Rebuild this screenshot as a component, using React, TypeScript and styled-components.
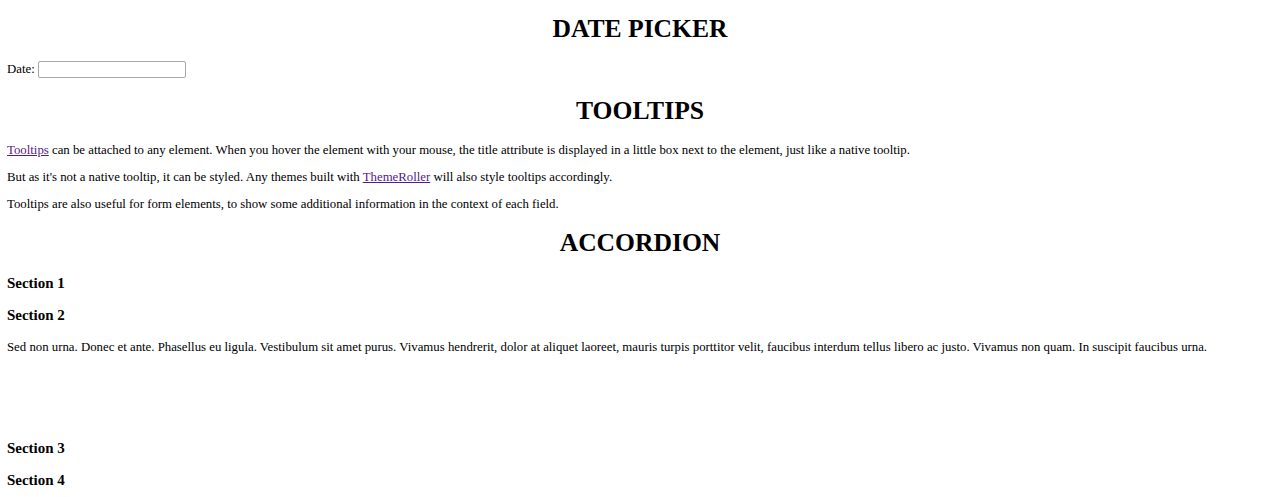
import React from "react";
import styled, { createGlobalStyle } from "styled-components";

const Global = createGlobalStyle`
  body {
    margin: 0;
    padding: 0 7px;
    font-family: "Liberation Serif", "Times New Roman", serif;
    font-size: 12.8px;
    color: #000;
    background: #fff;
  }
`;

const Page = styled.main`
  display: flow-root;
`;

const Title = styled.h2`
  text-align: center;
  font-size: 25.6px;
  font-weight: bold;
  margin: 17.6px 0 17px;
  line-height: normal;

  &:first-child {
    margin-top: 14px;
  }
`;

const Para = styled.p`
  margin: 12.8px 0;
  line-height: 14.2px;
`;

const Label = styled.label`
  display: inline-flex;
  align-items: center;
  gap: 3px;
`;

const DateInput = styled.input`
  box-sizing: border-box;
  width: 148px;
  height: 17px;
  border: 1px solid #a8a8a8;
  border-radius: 2px;
  padding: 1px 2px;
  font: inherit;
  background: #fff;
`;

const Link = styled.a`
  color: #551a8b;
  text-decoration: underline;
`;

const SectionHead = styled.h3`
  font-size: 1.17em;
  font-weight: bold;
  margin: 1em 0;
  line-height: normal;
`;

const Panel = styled.div`
  display: flow-root;
  box-sizing: border-box;
  padding-top: 1px;
  height: 86px;
`;

const PanelText = styled.p`
  margin: 0;
  line-height: normal;
`;

export default function App() {
  return (
    <Page>
      <Global />
      <Title>DATE PICKER</Title>
      <Para>
        <Label>
          Date: <DateInput type="text" />
        </Label>
      </Para>
      <Title>TOOLTIPS</Title>
      <Para>
        <Link href="#">Tooltips</Link> can be attached to any element. When you hover the element with your mouse, the title attribute is displayed in a little box next to the element, just like a native tooltip.
      </Para>
      <Para>
        But as it's not a native tooltip, it can be styled. Any themes built with <Link href="#">ThemeRoller</Link> will also style tooltips accordingly.
      </Para>
      <Para>
        Tooltips are also useful for form elements, to show some additional information in the context of each field.
      </Para>
      <Title>ACCORDION</Title>
      <SectionHead>Section 1</SectionHead>
      <SectionHead>Section 2</SectionHead>
      <Panel>
        <PanelText>
          Sed non urna. Donec et ante. Phasellus eu ligula. Vestibulum sit amet purus. Vivamus hendrerit, dolor at aliquet laoreet, mauris turpis porttitor velit, faucibus interdum tellus libero ac justo. Vivamus non quam. In suscipit faucibus urna.
        </PanelText>
      </Panel>
      <SectionHead>Section 3</SectionHead>
      <SectionHead>Section 4</SectionHead>
    </Page>
  );
}
